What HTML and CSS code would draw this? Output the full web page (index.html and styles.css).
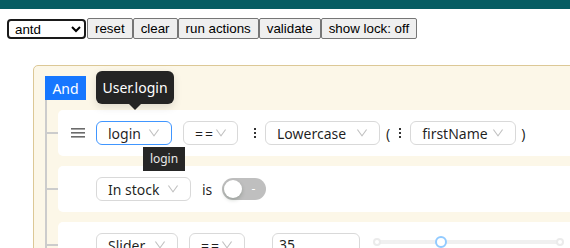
FILE: index.html
```html
<!DOCTYPE html>
<html>
<head>
<meta charset="utf-8">
<link rel="stylesheet" href="styles.css">
</head>
<body>
<div class="topbar"></div>
<div class="toolbar"><select class="lib"><option>antd</option></select><button class="btn">reset</button><button class="btn">clear</button><button class="btn">run actions</button><button class="btn">validate</button><button class="btn">show lock: off</button></div>
<div class="group">
  <div class="group-header">
    <button class="conj">And</button>
    <div class="tip-field">User.login</div>
  </div>
  <div class="children">
    <div class="item">
      <div class="rule">
        <span class="handle"><svg width="14" height="10" viewBox="0 0 14 10"><rect x="0" y="0" width="14" height="1.6" fill="#6b6b6b"/><rect x="0" y="4" width="14" height="1.6" fill="#6b6b6b"/><rect x="0" y="8" width="14" height="1.6" fill="#6b6b6b"/></svg></span>
        <div class="sel focus w-login"><span>login</span><svg class="arr" viewBox="64 64 896 896" width="12" height="12"><path d="M884 256h-75c-5.1 0-9.9 2.5-12.9 6.6L512 654.2 227.9 262.6c-3-4.1-7.8-6.6-12.9-6.6h-75c-6.5 0-10.3 7.4-6.5 12.7l352.6 486.1c12.8 17.6 39 17.6 51.7 0l352.6-486.1c3.9-5.3.1-12.7-6.4-12.7z"/></svg></div>
        <div class="sel w-eq"><span class="op">==</span><svg class="arr" viewBox="64 64 896 896" width="12" height="12"><path d="M884 256h-75c-5.1 0-9.9 2.5-12.9 6.6L512 654.2 227.9 262.6c-3-4.1-7.8-6.6-12.9-6.6h-75c-6.5 0-10.3 7.4-6.5 12.7l352.6 486.1c12.8 17.6 39 17.6 51.7 0l352.6-486.1c3.9-5.3.1-12.7-6.4-12.7z"/></svg></div>
        <span class="dots d1"><svg width="4" height="12" viewBox="0 0 4 12"><rect x="1" y="1" width="2" height="2" fill="#333"/><rect x="1" y="5" width="2" height="2" fill="#333"/><rect x="1" y="9" width="2" height="2" fill="#333"/></svg></span>
        <div class="sel w-lower"><span>Lowercase</span><svg class="arr" viewBox="64 64 896 896" width="12" height="12"><path d="M884 256h-75c-5.1 0-9.9 2.5-12.9 6.6L512 654.2 227.9 262.6c-3-4.1-7.8-6.6-12.9-6.6h-75c-6.5 0-10.3 7.4-6.5 12.7l352.6 486.1c12.8 17.6 39 17.6 51.7 0l352.6-486.1c3.9-5.3.1-12.7-6.4-12.7z"/></svg></div>
        <span class="paren open">(</span>
        <span class="dots d2"><svg width="4" height="12" viewBox="0 0 4 12"><rect x="1" y="1" width="2" height="2" fill="#333"/><rect x="1" y="5" width="2" height="2" fill="#333"/><rect x="1" y="9" width="2" height="2" fill="#333"/></svg></span>
        <div class="sel w-first"><span>firstName</span><svg class="arr" viewBox="64 64 896 896" width="12" height="12"><path d="M884 256h-75c-5.1 0-9.9 2.5-12.9 6.6L512 654.2 227.9 262.6c-3-4.1-7.8-6.6-12.9-6.6h-75c-6.5 0-10.3 7.4-6.5 12.7l352.6 486.1c12.8 17.6 39 17.6 51.7 0l352.6-486.1c3.9-5.3.1-12.7-6.4-12.7z"/></svg></div>
        <span class="paren close">)</span>
        <div class="tip-opt">login</div>
      </div>
    </div>
    <div class="item">
      <div class="rule">
        <span class="handle hidden"></span>
        <div class="sel w-stock"><span>In stock</span><svg class="arr" viewBox="64 64 896 896" width="12" height="12"><path d="M884 256h-75c-5.1 0-9.9 2.5-12.9 6.6L512 654.2 227.9 262.6c-3-4.1-7.8-6.6-12.9-6.6h-75c-6.5 0-10.3 7.4-6.5 12.7l352.6 486.1c12.8 17.6 39 17.6 51.7 0l352.6-486.1c3.9-5.3.1-12.7-6.4-12.7z"/></svg></div>
        <span class="is">is</span>
        <div class="switch"><span class="knob"></span><span class="sw-inner">-</span></div>
      </div>
    </div>
    <div class="item">
      <div class="rule">
        <span class="handle hidden"></span>
        <div class="sel w-slider"><span>Slider</span><svg class="arr" viewBox="64 64 896 896" width="12" height="12"><path d="M884 256h-75c-5.1 0-9.9 2.5-12.9 6.6L512 654.2 227.9 262.6c-3-4.1-7.8-6.6-12.9-6.6h-75c-6.5 0-10.3 7.4-6.5 12.7l352.6 486.1c12.8 17.6 39 17.6 51.7 0l352.6-486.1c3.9-5.3.1-12.7-6.4-12.7z"/></svg></div>
        <div class="sel w-eq2"><span class="op">==</span><svg class="arr" viewBox="64 64 896 896" width="12" height="12"><path d="M884 256h-75c-5.1 0-9.9 2.5-12.9 6.6L512 654.2 227.9 262.6c-3-4.1-7.8-6.6-12.9-6.6h-75c-6.5 0-10.3 7.4-6.5 12.7l352.6 486.1c12.8 17.6 39 17.6 51.7 0l352.6-486.1c3.9-5.3.1-12.7-6.4-12.7z"/></svg></div>
        <div class="inp">35</div>
        <div class="slider">
          <span class="rail"></span>
          <span class="sdot sdot-l"></span>
          <span class="sdot sdot-r"></span>
          <span class="shandle"></span>
        </div>
      </div>
    </div>
  </div>
</div>
</body>
</html>
```
FILE: styles.css
```css
* { box-sizing: border-box; }
html, body { margin: 0; padding: 0; background: #fff; }
body {
  width: 570px;
  height: 248px;
  overflow: hidden;
  font-family: "Noto Sans", "Open Sans", sans-serif;
  font-size: 14px;
  color: rgba(0, 0, 0, 0.88);
}
.topbar { height: 9px; background: #065d63; }
.toolbar {
  display: flex;
  align-items: center;
  height: 30px;
  padding: 9px 0 0 7px;
}
.toolbar .lib {
  width: 79px;
  height: 20px;
  font-family: "Liberation Sans", Arial, sans-serif;
  font-size: 13.33px;
  border: 2px solid #1a1a1a;
  border-radius: 4px;
  background: #fff;
  color: #000;
  padding: 0 2px;
  margin: 0 1px 0 0;
}
.btn {
  height: 21px;
  margin: 0;
  padding: 1px 7px;
  font-family: "Liberation Sans", Arial, sans-serif;
  font-size: 13.33px;
  color: #000;
  background: #efefef;
  border: 1px solid #767676;
  border-radius: 2px;
}
.group {
  margin: 26px 0 0 33px;
  width: 600px;
  border: 1px solid #dcc896;
  border-radius: 5px;
  background: rgba(250, 240, 210, 0.5);
  padding: 10px 0 0 11px;
  height: 300px;
}
.group-header {
  position: relative;
  height: 24px;
  display: flex;
}
.conj {
  height: 24px;
  width: 41px;
  padding: 0;
  border: none;
  background: #1677ff;
  color: #fff;
  font-family: inherit;
  font-size: 14px;
  border-radius: 0;
}
.tip-field {
  position: absolute;
  left: 51px;
  top: -5px;
  width: 78px;
  height: 33px;
  background: #242424;
  color: #fff;
  border-radius: 6px;
  font-size: 14px;
  line-height: 33px;
  text-align: center;
  z-index: 20;
  box-shadow: 0 3px 8px rgba(0,0,0,0.12);
}
.tip-field::after {
  content: "";
  position: absolute;
  left: 33px;
  bottom: -6px;
  border-left: 6px solid transparent;
  border-right: 6px solid transparent;
  border-top: 6px solid #242424;
}
.children {
  border-left: 2px solid #ccc;
  padding-top: 10px;
}
.item {
  position: relative;
  margin: 0 0 10px 11px;
}
.item::before {
  content: "";
  position: absolute;
  left: -11px;
  top: 22px;
  width: 11px;
  border-top: 2px solid #ccc;
}
.rule {
  position: relative;
  display: flex;
  align-items: center;
  height: 46px;
  background: #fff;
  border: 1px solid transparent;
  border-radius: 5px;
  padding: 10px 10px 10px 12px;
}
.handle {
  width: 14px;
  height: 10px;
  margin-right: 11px;
  display: flex;
}
.handle.hidden { visibility: hidden; }
.sel {
  display: flex;
  align-items: center;
  justify-content: space-between;
  height: 24px;
  border: 1px solid #d9d9d9;
  border-radius: 6px;
  padding: 0 11px;
  background: #fff;
  white-space: nowrap;
  flex: none;
}
.sel.focus { border-color: #4096ff; }
.sel .arr { fill: rgba(0, 0, 0, 0.25); flex: none; }
.op { letter-spacing: 2px; }
.w-login { width: 76px; margin-right: 11px; }
.w-eq { width: 55px; }
.w-lower { width: 115px; }
.w-first { width: 106px; }
.w-stock { width: 95px; }
.w-slider { width: 82px; margin-right: 11px; }
.w-eq2 { width: 56px; }
.dots { display: flex; width: 10px; justify-content: center; flex: none; }
.d1 { margin: 0 5px 0 12px; }
.d2 { margin: 0 5px 0 5px; }
.paren { flex: none; }
.paren.open { margin-left: 6px; }
.paren.close { margin-left: 5px; }
.tip-opt {
  position: absolute;
  left: 84px;
  top: 36px;
  width: 42px;
  height: 24px;
  background: #262626;
  color: #e8e8e8;
  font-size: 12px;
  line-height: 24px;
  text-align: center;
  z-index: 20;
}
.is { margin-left: 11px; }
.switch {
  position: relative;
  margin-left: 10px;
  width: 44px;
  height: 22px;
  border-radius: 11px;
  background: #bfbfbf;
  flex: none;
}
.knob {
  position: absolute;
  left: 2px;
  top: 2px;
  width: 18px;
  height: 18px;
  border-radius: 50%;
  background: #fff;
  box-shadow: 0 2px 4px rgba(0, 35, 11, 0.2);
}
.sw-inner {
  position: absolute;
  left: 25px;
  right: 7px;
  top: 0;
  line-height: 22px;
  text-align: center;
  color: #fff;
  font-size: 12px;
}
.inp {
  width: 88px;
  height: 24px;
  margin-left: 27px;
  border: 1px solid #d9d9d9;
  border-radius: 6px;
  padding: 0 6px;
  line-height: 22px;
  background: #fff;
  flex: none;
}
.slider {
  position: relative;
  align-self: flex-start;
  margin-left: 13px;
  width: 191px;
  height: 24px;
  flex: none;
}
.rail {
  position: absolute;
  left: 3px;
  right: 3px;
  top: 7px;
  height: 4px;
  border-radius: 2px;
  background: #f0f0f0;
}
.sdot {
  position: absolute;
  top: 5px;
  width: 8px;
  height: 8px;
  border-radius: 50%;
  background: #fff;
  border: 2px solid #ebebeb;
}
.sdot-l { left: 0; }
.sdot-r { right: 0; }
.shandle {
  position: absolute;
  left: 62px;
  top: 3px;
  width: 12px;
  height: 12px;
  border-radius: 50%;
  background: #fff;
  border: 2px solid #91caff;
}
```
